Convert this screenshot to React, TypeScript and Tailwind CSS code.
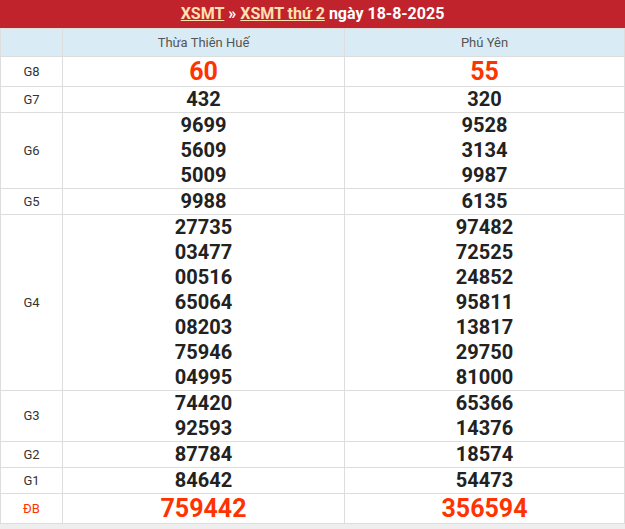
const rows: [string, string[], string[], boolean][] = [
  ["G8", ["60"], ["55"], true],
  ["G7", ["432"], ["320"], false],
  ["G6", ["9699", "5609", "5009"], ["9528", "3134", "9987"], false],
  ["G5", ["9988"], ["6135"], false],
  ["G4", ["27735", "03477", "00516", "65064", "08203", "75946", "04995"], ["97482", "72525", "24852", "95811", "13817", "29750", "81000"], false],
  ["G3", ["74420", "92593"], ["65366", "14376"], false],
  ["G2", ["87784"], ["18574"], false],
  ["G1", ["84642"], ["54473"], false],
  ["ĐB", ["759442"], ["356594"], true],
];

function Cell({ nums, big }: { nums: string[]; big: boolean }) {
  return (
    <td className="border border-[#dddddd] text-center p-0">
      {nums.map((n) => (
        <div
          key={n}
          className={big ? "text-[25px] leading-[29px] font-bold text-[#ff3300]" : "text-[20px] leading-[25px] font-bold text-[#222222]"}
        >
          {n}
        </div>
      ))}
    </td>
  );
}

export default function App() {
  return (
    <div className="w-[625px] h-[529px] bg-[#eeeeee]" style={{ fontFamily: "Roboto, 'Liberation Sans', sans-serif" }}>
      <div className="bg-white">
        <div className="h-[28px] bg-[#c0232b] text-white font-bold text-[16px] flex items-center justify-center gap-1">
          <span className="underline text-[#ffe0b0]">XSMT</span>
          <span>»</span>
          <span className="underline text-[#ffe0b0]">XSMT thứ 2</span>
          <span>ngày 18-8-2025</span>
        </div>
        <table className="w-full border-collapse table-fixed">
          <colgroup>
            <col className="w-[62px]" />
            <col className="w-[282px]" />
            <col />
          </colgroup>
          <tbody>
            <tr className="bg-[#d9ecf5] h-[28px] text-[13px] text-[#555555]">
              <td className="border border-[#dddddd]"></td>
              <td className="border border-[#dddddd] text-center">Thừa Thiên Huế</td>
              <td className="border border-[#dddddd] text-center">Phú Yên</td>
            </tr>
            {rows.map(([label, a, b, big]) => (
              <tr key={label}>
                <td className={"border border-[#dddddd] text-center text-[13px] " + (label === "ĐB" ? "text-[#ff3300]" : "text-[#333333]")}>{label}</td>
                <Cell nums={a} big={big} />
                <Cell nums={b} big={big} />
              </tr>
            ))}
          </tbody>
        </table>
      </div>
    </div>
  );
}
